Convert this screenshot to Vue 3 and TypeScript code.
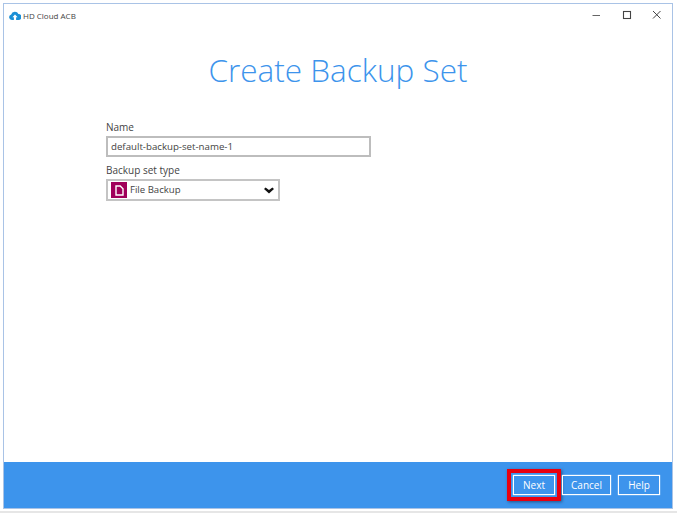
<script setup lang="ts">
const buttons: string[] = ['Next', 'Cancel', 'Help']
</script>

<template>
  <div class="page">
    <div class="window">
      <header class="titlebar">
        <div class="app">
          <svg class="logo" width="12" height="9" viewBox="0 0 12 9">
            <path d="M2.8 9a2.8 2.8 0 0 1-.6-5.5A3.8 3.8 0 0 1 9.4 3 3 3 0 0 1 9.4 9H7.1V6.2h1.5L6 3.6 3.4 6.2h1.5V9z" fill="#1a8fd6" />
          </svg>
          <span>HD Cloud ACB</span>
        </div>
        <div class="controls">
          <svg width="10" height="10" viewBox="0 0 10 10"><path d="M.5 5.5h7.5" stroke="#666" stroke-width="1" /></svg>
          <svg width="10" height="10" viewBox="0 0 10 10"><rect x="1.5" y="1.5" width="7" height="7" fill="none" stroke="#444" stroke-width="1.1" /></svg>
          <svg width="10" height="10" viewBox="0 0 10 10"><path d="M1 1l7.5 7.5M8.5 1l-7.5 7.5" stroke="#444" stroke-width="1" /></svg>
        </div>
      </header>
      <main class="content">
        <h1>Create Backup Set</h1>
        <form class="form" @submit.prevent>
          <label class="label">Name</label>
          <div class="input">default-backup-set-name-1</div>
          <label class="label second">Backup set type</label>
          <div class="select">
            <span class="type-icon">
              <svg width="9" height="11" viewBox="0 0 9 11">
                <path d="M1 1h4.2L8 3.8V10H1z" fill="none" stroke="#fff" stroke-width="1.4" />
              </svg>
            </span>
            <span class="type-name">File Backup</span>
            <svg class="chevron" width="10" height="7" viewBox="0 0 10 7">
              <path d="M0 2 1.6.4 5 3l3.4-2.6L10 2 5 6.4z" fill="#111" />
            </svg>
          </div>
        </form>
      </main>
      <footer class="footer">
        <button v-for="b in buttons" :key="b" type="button" class="btn" :class="{ next: b === 'Next' }">
          {{ b }}
        </button>
      </footer>
    </div>
  </div>
</template>

<style>
html, body { margin: 0; background: #fff; }
</style>

<style scoped>
.page {
  width: 677px;
  height: 513px;
  box-sizing: border-box;
  padding: 3px 4px 2px 3px;
  background: #fff;
  border-bottom: 2px solid #e6e6e6;
  font-family: "Open Sans", "Noto Sans", sans-serif;
  display: flex;
}
.window {
  flex: 1;
  display: flex;
  flex-direction: column;
  box-sizing: border-box;
  border: 1px solid #a9c3e6;
  background: #fff;
}
.titlebar {
  height: 22px;
  display: flex;
  align-items: center;
  justify-content: space-between;
  padding: 0 10px 0 5px;
  font-size: 8px;
  color: #444;
}
.app { display: flex; align-items: center; gap: 2px; }
.controls { display: flex; align-items: center; gap: 20px; }
.content { flex: 1; display: flex; flex-direction: column; align-items: center; }
h1 {
  margin: 21px 0 0;
  font-size: 31.5px;
  line-height: 45px;
  font-weight: 300;
  color: #3d94ec;
}
.form { align-self: flex-start; margin: 28px 0 0 102px; display: flex; flex-direction: column; align-items: flex-start; }
.label { font-size: 10px; line-height: 14px; color: #444; }
.second { margin-top: 6px; }
.input {
  width: 265px;
  height: 21px;
  box-sizing: border-box;
  margin-top: 2px;
  border: 2px solid #bdbdbd;
  padding-left: 3px;
  font-size: 9.7px;
  line-height: 17px;
  color: #444;
  background: #fff;
}
.select {
  width: 174px;
  height: 22px;
  box-sizing: border-box;
  margin-top: 2px;
  border: 2px solid #c4c4c4;
  padding-left: 3px;
  padding-right: 4px;
  display: flex;
  align-items: center;
  font-size: 9.6px;
  color: #444;
}
.type-icon {
  width: 16px;
  height: 16px;
  background: #a0005a;
  display: flex;
  align-items: center;
  justify-content: center;
}
.type-name { margin-left: 3px; flex: 1; padding-bottom: 2px; }
.footer {
  height: 46px;
  background: #3d94ec;
  display: flex;
  align-items: center;
  justify-content: flex-end;
  gap: 7px;
  padding: 0 12px 0 0;
}
.btn {
  position: relative;
  height: 20px;
  box-sizing: border-box;
  border: 1px solid #fff;
  box-shadow: 0 0 1px #fff;
  background: transparent;
  color: #fff;
  font: 10px "Open Sans", "Noto Sans", sans-serif;
  padding: 0;
  width: 49px;
}
.btn.next { width: 42px; }
.btn.next::after {
  content: "";
  position: absolute;
  inset: -7px;
  border: 4px solid #e8000f;
  box-shadow: 1px 1px 3px rgba(0, 0, 0, 0.45);
}
.btn:last-child { width: 42px; }
</style>
